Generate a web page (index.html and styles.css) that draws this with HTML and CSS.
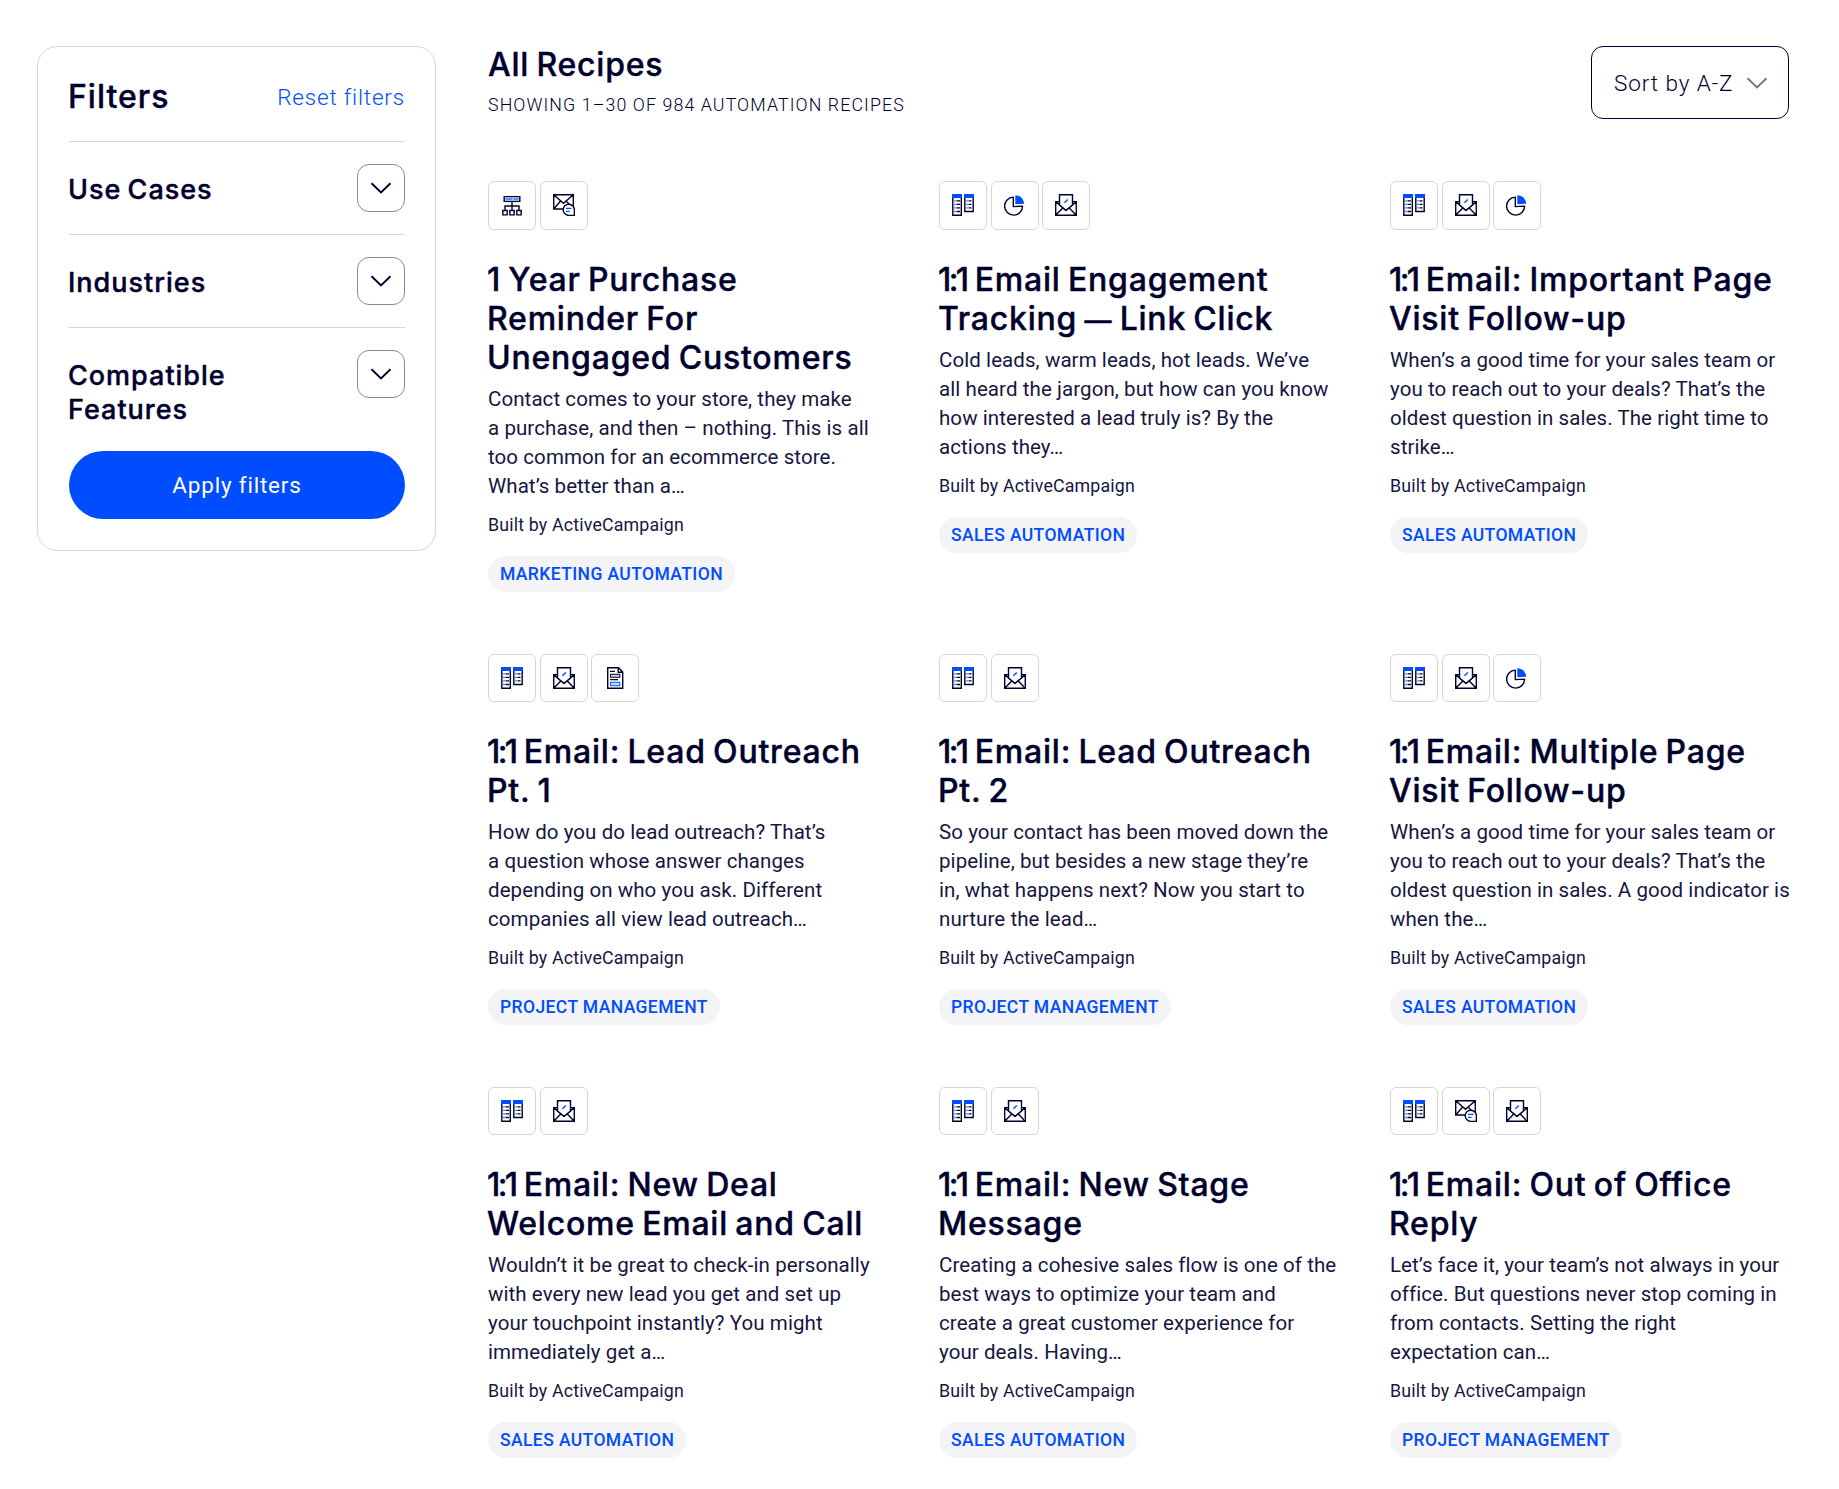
FILE: index.html
```html
<!DOCTYPE html>
<html lang="en">
<head>
<meta charset="utf-8">
<title>Automation Recipes</title>
<link rel="stylesheet" href="styles.css">
</head>
<body>
<svg class="sprite" aria-hidden="true">
  <symbol id="contacts" viewBox="0 0 22 22">
    <path d="M.8 3V21.2H9.3V3M12.8 3V17.5H21.2V3" fill="none" stroke="#00002d" stroke-width="1.4"/>
    <path d="M0 0H10V4H0zM12 0H22V4H12z" fill="#004cff"/>
    <path d="M4.5 6.8H8M4.5 10.3H8M4.5 13.8H8M4.5 17.5H8M16.5 6.8H19.5M16.5 10.3H19.5M16.5 13.8H19.5" stroke="#00002d" stroke-width="1.3"/>
    <path d="M2.3 6.8H3.7M2.3 10.3H3.7M2.3 13.8H3.7M2.3 17.5H3.7M14.3 6.8H15.7M14.3 10.3H15.7M14.3 13.8H15.7" stroke="#004cff" stroke-width="1.3"/>
  </symbol>
  <symbol id="pie" viewBox="0 0 22 22">
    <path d="M9.3 3.1A9 9 0 1 0 18.6 12.1L9.3 12.6z" fill="none" stroke="#00002d" stroke-width="1.4" stroke-linejoin="round"/>
    <path d="M11.3 1.2Q19 1.6 20.3 9.7L11.3 10.3z" fill="#004cff"/>
  </symbol>
  <symbol id="mail" viewBox="0 0 22 22">
    <path d="M4.5 7.6H.7V21.3H21.3V7.6H17.5M.7 7.6L11 16.3L21.3 7.6M.7 21.3L8 13.8M21.3 21.3L14 13.8" fill="none" stroke="#00002d" stroke-width="1.4"/>
    <path d="M4.5 11V.7H17.5V11L11 16.3z" fill="#fff" stroke="#00002d" stroke-width="1.4"/>
    <path d="M9.4 8.8L12.8 5.4" stroke="#004cff" stroke-width="1.4"/>
  </symbol>
  <symbol id="reply" viewBox="0 0 22 22">
    <path d="M.7 .7H20.3V15H.7zM.7 .7L10.5 9.3L20.3 .7M.7 15L7.6 7M20.3 15L13.2 7" fill="none" stroke="#00002d" stroke-width="1.4"/>
    <path d="M21.4 21.4H16A5.6 5.6 0 1 1 21.4 16z" fill="#fff" stroke="#00002d" stroke-width="1.4"/>
    <path d="M13 14.4H18.6M13 17.4H16.6" stroke="#004cff" stroke-width="1.4"/>
  </symbol>
  <symbol id="tree" viewBox="0 0 22 22">
    <path d="M3.2 2.6H18.8V7.4H3.2zM11 7.4V16.5M4 16.5V12H18V16.5M1.8 16.5H6.2V20.9H1.8zM8.8 16.5H13.2V20.9H8.8zM15.8 16.5H20.2V20.9H15.8z" fill="none" stroke="#00002d" stroke-width="1.4"/>
    <path d="M4.4 5H11.6M12.4 5H17.6" stroke="#5c8dff" stroke-width="2.4"/>
  </symbol>
  <symbol id="form" viewBox="0 0 22 22">
    <path d="M3.7 .7H14.5L18.7 5V21.3H3.7zM14.2 .7V5.2H18.7" fill="none" stroke="#00002d" stroke-width="1.4"/>
    <path d="M6 4.3H11M6 12.7H14" stroke="#00002d" stroke-width="1.2"/>
    <rect x="6.6" y="7.3" width="9.2" height="3" fill="#d3d4dc" stroke="#00002d"/>
    <rect x="6.6" y="15.3" width="9.2" height="3.4" fill="#cfdfff" stroke="#004cff"/>
  </symbol>
  <symbol id="chevron" viewBox="0 0 22 12">
    <path d="M1.5 1.2L11 10.4L20.5 1.2" fill="none" stroke="currentColor" stroke-width="1.9"/>
  </symbol>
</svg>

<div class="page">
  <aside class="filters">
    <div class="filters-head">
      <h2 class="filters-title">Filters</h2>
      <a class="reset">Reset filters</a>
    </div>
    <div class="filter-row">
      <h3 class="filter-name">Use Cases</h3>
      <button class="toggle"><svg class="chev"><use href="#chevron"/></svg></button>
    </div>
    <div class="filter-row">
      <h3 class="filter-name">Industries</h3>
      <button class="toggle"><svg class="chev"><use href="#chevron"/></svg></button>
    </div>
    <div class="filter-row">
      <h3 class="filter-name">Compatible<br>Features</h3>
      <button class="toggle"><svg class="chev"><use href="#chevron"/></svg></button>
    </div>
    <button class="apply">Apply filters</button>
  </aside>

  <main class="results">
    <header class="results-head">
      <div>
        <h1 class="results-title">All Recipes</h1>
        <p class="count">Showing 1–30 of 984 automation recipes</p>
      </div>
      <button class="sort"><span>Sort by A-Z</span><svg class="chev"><use href="#chevron"/></svg></button>
    </header>

    <div class="grid">
      <article class="card">
        <div class="icons"><span class="icon"><svg><use href="#tree"/></svg></span><span class="icon"><svg><use href="#reply"/></svg></span></div>
        <h2 class="title">1 Year Purchase<br>Reminder For<br>Unengaged Customers</h2>
        <p class="desc">Contact comes to your store, they make<br>a purchase, and then – nothing. This is all<br>too common for an ecommerce store.<br>What’s better than a…</p>
        <p class="author">Built by ActiveCampaign</p>
        <span class="tag">Marketing Automation</span>
      </article>
      <article class="card">
        <div class="icons"><span class="icon"><svg><use href="#contacts"/></svg></span><span class="icon"><svg><use href="#pie"/></svg></span><span class="icon"><svg><use href="#mail"/></svg></span></div>
        <h2 class="title"><span class="ratio">1:1</span> Email Engagement<br>Tracking <span class="dash">—</span> Link Click</h2>
        <p class="desc">Cold leads, warm leads, hot leads. We’ve<br>all heard the jargon, but how can you know<br>how interested a lead truly is? By the<br>actions they…</p>
        <p class="author">Built by ActiveCampaign</p>
        <span class="tag">Sales Automation</span>
      </article>
      <article class="card">
        <div class="icons"><span class="icon"><svg><use href="#contacts"/></svg></span><span class="icon"><svg><use href="#mail"/></svg></span><span class="icon"><svg><use href="#pie"/></svg></span></div>
        <h2 class="title"><span class="ratio">1:1</span> Email: Important Page<br>Visit Follow-up</h2>
        <p class="desc">When’s a good time for your sales team or<br>you to reach out to your deals? That’s the<br>oldest question in sales. The right time to<br>strike…</p>
        <p class="author">Built by ActiveCampaign</p>
        <span class="tag">Sales Automation</span>
      </article>

      <article class="card">
        <div class="icons"><span class="icon"><svg><use href="#contacts"/></svg></span><span class="icon"><svg><use href="#mail"/></svg></span><span class="icon"><svg><use href="#form"/></svg></span></div>
        <h2 class="title"><span class="ratio">1:1</span> Email: Lead Outreach<br>Pt. 1</h2>
        <p class="desc">How do you do lead outreach? That’s<br>a question whose answer changes<br>depending on who you ask. Different<br>companies all view lead outreach…</p>
        <p class="author">Built by ActiveCampaign</p>
        <span class="tag">Project Management</span>
      </article>
      <article class="card">
        <div class="icons"><span class="icon"><svg><use href="#contacts"/></svg></span><span class="icon"><svg><use href="#mail"/></svg></span></div>
        <h2 class="title"><span class="ratio">1:1</span> Email: Lead Outreach<br>Pt. 2</h2>
        <p class="desc">So your contact has been moved down the<br>pipeline, but besides a new stage they’re<br>in, what happens next? Now you start to<br>nurture the lead…</p>
        <p class="author">Built by ActiveCampaign</p>
        <span class="tag">Project Management</span>
      </article>
      <article class="card">
        <div class="icons"><span class="icon"><svg><use href="#contacts"/></svg></span><span class="icon"><svg><use href="#mail"/></svg></span><span class="icon"><svg><use href="#pie"/></svg></span></div>
        <h2 class="title"><span class="ratio">1:1</span> Email: Multiple Page<br>Visit Follow-up</h2>
        <p class="desc">When’s a good time for your sales team or<br>you to reach out to your deals? That’s the<br>oldest question in sales. A good indicator is<br>when the…</p>
        <p class="author">Built by ActiveCampaign</p>
        <span class="tag">Sales Automation</span>
      </article>

      <article class="card">
        <div class="icons"><span class="icon"><svg><use href="#contacts"/></svg></span><span class="icon"><svg><use href="#mail"/></svg></span></div>
        <h2 class="title"><span class="ratio">1:1</span> Email: New Deal<br>Welcome Email and Call</h2>
        <p class="desc">Wouldn’t it be great to check-in personally<br>with every new lead you get and set up<br>your touchpoint instantly? You might<br>immediately get a…</p>
        <p class="author">Built by ActiveCampaign</p>
        <span class="tag">Sales Automation</span>
      </article>
      <article class="card">
        <div class="icons"><span class="icon"><svg><use href="#contacts"/></svg></span><span class="icon"><svg><use href="#mail"/></svg></span></div>
        <h2 class="title"><span class="ratio">1:1</span> Email: New Stage<br>Message</h2>
        <p class="desc">Creating a cohesive sales flow is one of the<br>best ways to optimize your team and<br>create a great customer experience for<br>your deals. Having…</p>
        <p class="author">Built by ActiveCampaign</p>
        <span class="tag">Sales Automation</span>
      </article>
      <article class="card">
        <div class="icons"><span class="icon"><svg><use href="#contacts"/></svg></span><span class="icon"><svg><use href="#reply"/></svg></span><span class="icon"><svg><use href="#mail"/></svg></span></div>
        <h2 class="title"><span class="ratio">1:1</span> Email: Out of Office<br>Reply</h2>
        <p class="desc">Let’s face it, your team’s not always in your<br>office. But questions never stop coming in<br>from contacts. Setting the right<br>expectation can…</p>
        <p class="author">Built by ActiveCampaign</p>
        <span class="tag">Project Management</span>
      </article>
    </div>
  </main>
</div>
</body>
</html>
```

FILE: styles.css
```css
* { box-sizing: border-box; }

body {
  margin: 0;
  background: #fff;
  color: #00002d;
  font-family: Roboto, "Liberation Sans", sans-serif;
  font-weight: 400;
}

h1, h2, h3, p { margin: 0; }

h1, h2, h3 {
  font-family: Inter, "Liberation Sans", sans-serif;
  font-weight: 500;
  letter-spacing: 0.78px;
  word-spacing: -2px;
  white-space: nowrap;
  -webkit-text-stroke: 0.4px currentColor;
}

button {
  padding: 0;
  background: none;
  color: inherit;
  font: inherit;
}

.sprite { display: none; }

.page {
  display: flex;
  align-items: flex-start;
  gap: 52px;
  height: 1489px;
  padding: 46px 50px 0 37px;
  overflow: hidden;
}

/* Filter panel */
.filters {
  flex: none;
  width: 399px;
  height: 505px;
  padding: 31px 30px 31px 31px;
  border: 1px solid #d5d6dd;
  border-radius: 20px;
}

.filters-head {
  display: flex;
  justify-content: space-between;
  height: 63px;
  line-height: 38px;
}

.filters-title {
  margin-left: -1px;
  font-size: 32px;
  letter-spacing: 1px;
}

.reset {
  color: #004cff;
  font-size: 22.5px;
  font-weight: 300;
  letter-spacing: 0.82px;
}

.filter-row {
  display: flex;
  justify-content: space-between;
  align-items: flex-start;
  min-height: 93px;
  padding-top: 22px;
  border-top: 1px solid #d5d6dd;
}

.filter-name {
  margin: 9px 0 0 -1px;
  font-size: 27px;
  line-height: 34px;
  letter-spacing: 1px;
}

.toggle {
  display: flex;
  align-items: center;
  justify-content: center;
  width: 48px;
  height: 48px;
  border: 1px solid #8787a0;
  border-radius: 12px;
}

.chev {
  width: 22px;
  height: 12px;
}

.toggle .chev { margin-bottom: 1px; }

.apply {
  width: 100%;
  height: 68px;
  margin-top: 24px;
  border: 0;
  border-radius: 34px;
  background: #004cff;
  color: #fff;
  font-size: 22.5px;
  font-weight: 400;
  letter-spacing: 0.8px;
}

/* Results */
.results { flex: 1; }

.results-head {
  display: flex;
  justify-content: space-between;
  height: 73px;
}

.results-title {
  font-size: 32px;
  line-height: 37px;
}

.count {
  margin-top: 9px;
  font-size: 17.8px;
  font-weight: 300;
  line-height: 26px;
  letter-spacing: 1.1px;
  text-transform: uppercase;
}

.sort {
  display: flex;
  align-items: center;
  gap: 13px;
  width: 198px;
  height: 73px;
  padding-left: 22px;
  border: 1px solid #00002d;
  border-radius: 12px;
  font-size: 22.5px;
  font-weight: 300;
  letter-spacing: 0.92px;
  white-space: nowrap;
}

.sort .chev { color: #73738c; }

.grid {
  display: grid;
  grid-template-columns: repeat(3, 399px);
  gap: 61.4px 52px;
  margin-top: 62.3px;
}

.icons {
  display: flex;
  gap: 3.7px;
  height: 48.4px;
}

.icon {
  display: flex;
  align-items: center;
  justify-content: center;
  width: 48px;
  border: 1px solid #d5d6dd;
  border-radius: 6px;
}

.icon svg {
  width: 22px;
  height: 22px;
}

.title {
  margin: 30px 0 0 -1px;
  font-size: 32px;
  line-height: 39.2px;
}

.ratio {
  margin-right: 1px;
  letter-spacing: -2.6px;
}

.dash {
  font-size: 27px;
  line-height: 1;
}

.desc {
  margin-top: 8px;
  color: #16163f;
  font-size: 20.5px;
  line-height: 28.9px;
  letter-spacing: 0.08px;
  white-space: nowrap;
}

.author {
  margin-top: 11px;
  color: #16163f;
  font-size: 17.8px;
  line-height: 26px;
  letter-spacing: 0.17px;
}

.tag {
  display: block;
  width: fit-content;
  height: 35.8px;
  margin-top: 18.4px;
  padding: 0 12px;
  border-radius: 18px;
  background: #f4f4f7;
  color: #004cff;
  font-size: 17.5px;
  font-weight: 500;
  line-height: 36px;
  letter-spacing: 0.4px;
  text-transform: uppercase;
}
```
